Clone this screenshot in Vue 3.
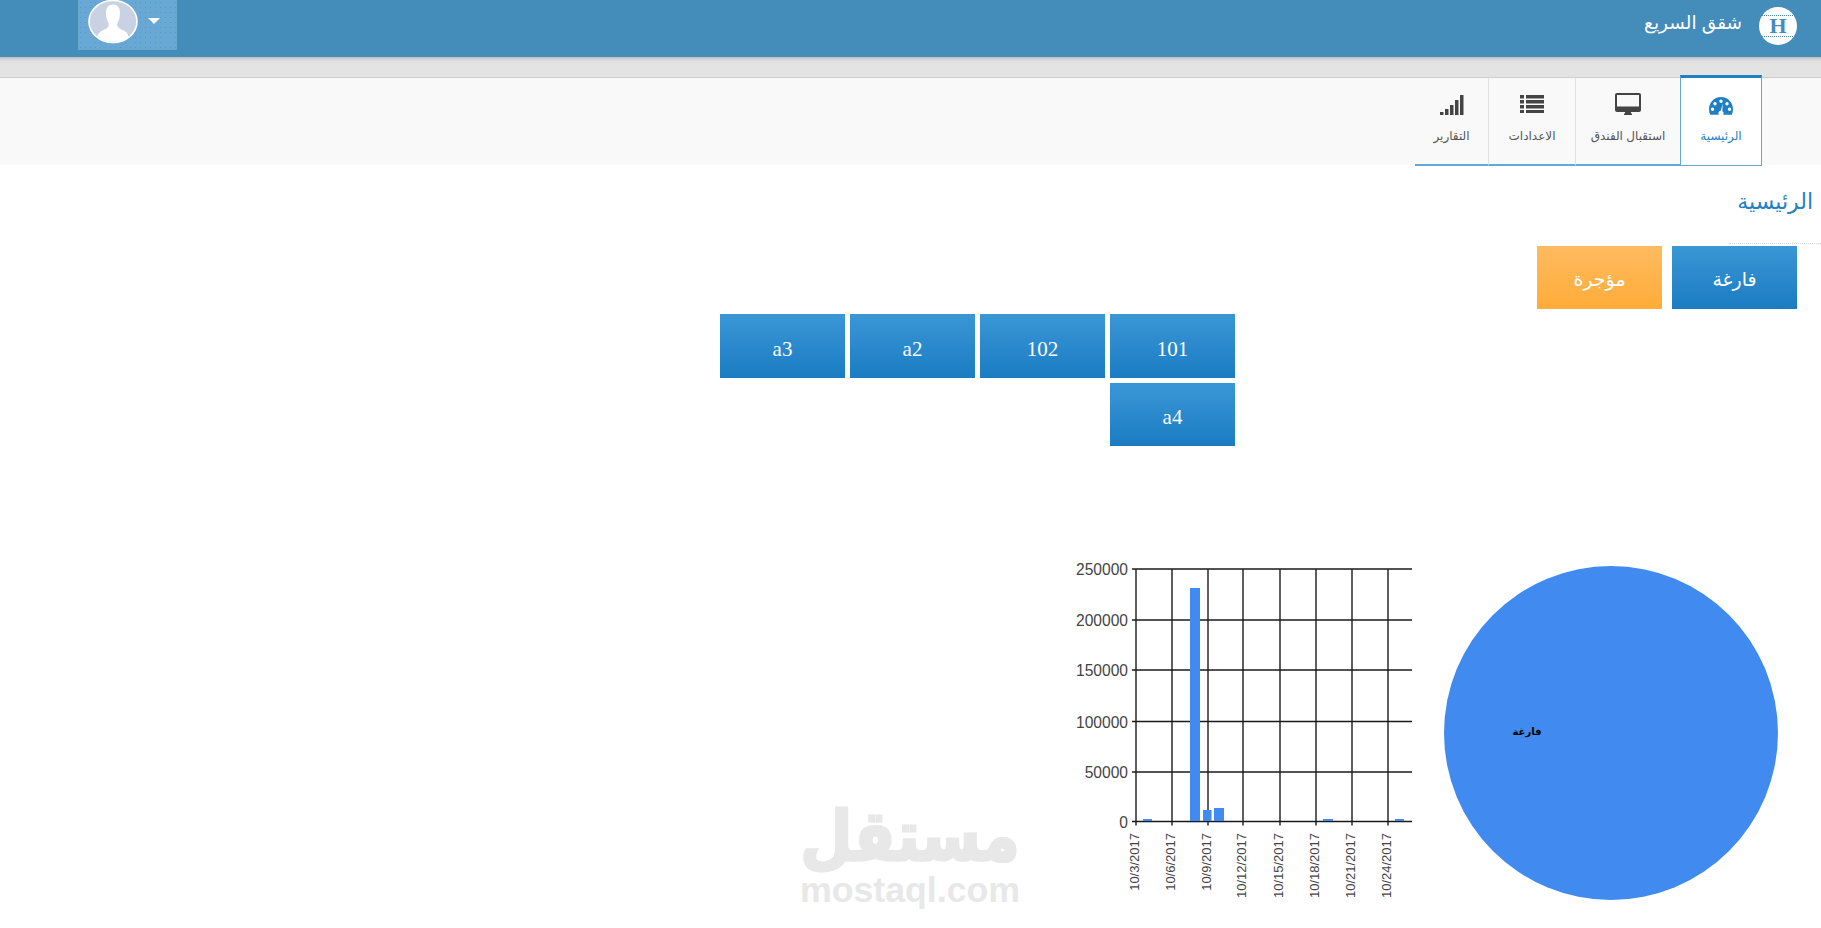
<template>
  <div class="page" dir="rtl">
    <header class="topbar">
      <div class="brand">
        <span class="logo"><span class="logo-h">H</span></span>
        <span class="brand-name">شقق السريع</span>
      </div>
      <div class="user">
        <svg class="avatar" viewBox="0 0 50 44" width="50" height="44">
          <ellipse cx="25" cy="21.5" rx="24" ry="21" fill="#c9d2e2" stroke="#fff" stroke-width="1.600" />
          <path d="M25 4.500c4.500 0 7 3 7 8.500 0 4-1 7-2.500 10-.8 2 0 4 2 5.500l5 2.500c2 1 3.500 3 4.500 6-5 3.500-10 4.500-16 4.500s-11-1-16-4.500c1-3 2.500-5 4.500-6l5-2.500c2-1.500 2.800-3.500 2-5.500-1.500-3-2.500-6-2.500-10 0-5.500 2.500-8.500 7-8.500z" fill="#fff" />
        </svg>
        <span class="caret"></span>
      </div>
    </header>
    <div class="band"></div>
    <nav class="tabs">
      <a v-for="t in tabs" :key="t.label" class="tab" :class="t.cls">
        <svg class="tab-icon" :width="t.w" :height="t.h" :viewBox="`0 0 ${t.w} ${t.h}`" v-html="t.icon"></svg>
        <span class="tab-label">{{ t.label }}</span>
      </a>
    </nav>
    <section class="title-block">
      <h1 class="title">الرئيسية</h1>
    </section>
    <div class="legend">
      <button class="tile blue sans">فارغة</button>
      <button class="tile orange sans">مؤجرة</button>
    </div>
    <div class="rooms">
      <button v-for="r in rooms" :key="r" class="tile blue room">{{ r }}</button>
    </div>
    <div class="charts">
      <svg class="pie" width="340" height="360" viewBox="1440 560 340 360">
        <circle cx="1611" cy="733" r="167" fill="#418bf0" />
        <text x="1527" y="735" text-anchor="middle" class="pie-label">فارغة</text>
      </svg>
      <svg class="bars" width="360" height="360" viewBox="1060 560 360 360">
        <g stroke="#1a1a1a" stroke-width="1.400">
          <line v-for="g in yGrid" :key="g.v" x1="1132" x2="1412" :y1="g.y" :y2="g.y" />
          <line v-for="x in xGrid" :key="x" :x1="x" :x2="x" y1="569" y2="825.500" />
        </g>
        <text v-for="g in yGrid" :key="'l' + g.v" x="1128" :y="g.y + 6" text-anchor="end" class="y-label">{{ g.v }}</text>
        <rect v-for="b in barData" :key="b.x" :x="b.x" :y="b.y" :width="b.w" :height="821 - b.y" fill="#418bf0" />
        <text v-for="l in xLabels" :key="l.t" class="x-label" text-anchor="end" :transform="`translate(${l.x} 833) rotate(-90)`">{{ l.t }}</text>
      </svg>
    </div>
    <div class="watermark">
      <span class="wm-ar">مستقل</span>
      <span class="wm-en">mostaql.com</span>
    </div>
  </div>
</template>

<script setup>
const tabs = [
  {
    label: 'الرئيسية', cls: 'home active', w: 24, h: 18,
    icon: '<path fill="#1f7fc3" fill-rule="evenodd" d="M12 0C5 0 0 5.500 0 12.500c0 2 .4 3.700 1.200 5.300h21.600c.8-1.600 1.200-3.300 1.200-5.300C24 5.500 19 0 12 0zM12 2.500a1.700 1.700 0 1 1 0 3.400 1.700 1.700 0 0 1 0-3.400zM6 5a1.700 1.700 0 1 1 0 3.400A1.700 1.700 0 0 1 6 5zM18 5a1.700 1.700 0 1 1 0 3.400A1.700 1.700 0 0 1 18 5zM3.500 10.500a1.700 1.700 0 1 1 0 3.400 1.700 1.700 0 0 1 0-3.400zM20.500 10.500a1.700 1.700 0 1 1 0 3.400 1.700 1.700 0 0 1 0-3.400zM13.800 6.500l-.5 7.500c.8.500 1.300 1.300 1.300 2.200 0 .6-.2 1.100-.5 1.600H10c-.4-.5-.6-1-.6-1.600 0-1.300 1-2.400 2.300-2.500z"/>'
  },
  {
    label: 'استقبال الفندق', cls: 'desk', w: 26, h: 22,
    icon: '<path fill="#444" fill-rule="evenodd" d="M2 0h22a2 2 0 0 1 2 2v15a2 2 0 0 1-2 2H16v1.500h1V22H9v-1.500h1V19H2a2 2 0 0 1-2-2V2a2 2 0 0 1 2-2zM2 2v11.500h22V2z"/>'
  },
  {
    label: 'الاعدادات', cls: 'settings', w: 24, h: 18,
    icon: '<path fill="#444" d="M0 0h4v3.500H0zM6 0h18v3.500H6zM0 5h4v3.500H0zM6 5h18v3.500H6zM0 10h4v3.500H0zM6 10h18v3.500H6zM0 15h4v3H0zM6 15h18v3H6z"/>'
  },
  {
    label: 'التقارير', cls: 'reports', w: 24, h: 20,
    icon: '<path fill="#444" d="M0 17h3.500v3H0zM5 14h3.500v6H5zM10 10h3.500v10H10zM15 5h3.500v15H15zM20 0h3.500v20H20z"/>'
  }
]
const rooms = ['101', '102', 'a2', 'a3', 'a4']
const yGrid = [
  { v: 250000, y: 569 },
  { v: 200000, y: 620 },
  { v: 150000, y: 670 },
  { v: 100000, y: 721.5 },
  { v: 50000, y: 772 },
  { v: 0, y: 821.5 }
]
const xGrid = [1136, 1172, 1208, 1243, 1280, 1316, 1352, 1388]
const barData = [
  { x: 1143, y: 819, w: 9 },
  { x: 1190, y: 588, w: 10 },
  { x: 1203, y: 810, w: 8.500 },
  { x: 1214, y: 808, w: 10 },
  { x: 1323, y: 819, w: 10 },
  { x: 1395, y: 819, w: 9 }
]
const dates = ['10/3/2017', '10/6/2017', '10/9/2017', '10/12/2017', '10/15/2017', '10/18/2017', '10/21/2017', '10/24/2017']
const xLabels = dates.map((t, i) => ({ t, x: xGrid[i] + 3 }))
</script>

<style>
html, body { margin: 0; background: #fff; }
</style>

<style scoped>
.page {
  position: relative;
  width: 1821px;
  height: 928px;
  overflow: hidden;
  background: #fff;
  font-family: "Liberation Sans", "DejaVu Sans", sans-serif;
}
.topbar {
  height: 57px;
  background: #448cba;
  display: flex;
  justify-content: space-between;
  align-items: flex-start;
  padding: 0 24px 0 78px;
}
.brand {
  display: flex;
  align-items: center;
  gap: 17px;
  height: 50px;
  color: #fff;
}
.logo {
  width: 38px;
  height: 38px;
  border-radius: 50%;
  background: #fff;
  display: flex;
  align-items: center;
  justify-content: center;
  margin-top: 2px;
}
.logo-h {
  width: 100%;
  text-align: center;
  font: bold 22px/20px "Liberation Serif", serif;
  color: #448cba;
  border-top: 1px dotted #448cba;
  border-bottom: 1px dotted #448cba;
}
.brand-name { font-size: 18.500px; margin-bottom: 4px; }
.user {
  width: 99px;
  height: 50px;
  box-sizing: border-box;
  display: flex;
  direction: ltr;
  align-items: flex-start;
  gap: 10px;
  padding-left: 10px;
  background-color: #69a8d3;
  background-image: radial-gradient(#4b9bd8 0.8px, transparent 1px);
  background-size: 5px 5px;
}
.avatar { flex: none; }
.caret {
  margin-top: 18px;
  width: 0;
  height: 0;
  border-left: 6.500px solid transparent;
  border-right: 6.500px solid transparent;
  border-top: 6.500px solid #fff;
}
.band {
  height: 21px;
  box-sizing: border-box;
  background: linear-gradient(#bdbdbd, #dcdcdc 3px, #e3e3e3 6px);
  border-bottom: 1px solid #cfcfcf;
}
.tabs {
  height: 88px;
  box-sizing: border-box;
  background: linear-gradient(#f9f9f9 87px, #fff 87px);
  display: flex;
  padding-right: 59px;
}
.tab {
  position: relative;
  box-sizing: border-box;
  height: 88px;
  display: flex;
  flex-direction: column;
  align-items: center;
  color: #555;
  border-bottom: 2px solid #63a9d5;
  border-left: 1px solid #e2e2e2;
}
.tab-icon { position: absolute; }
.tab-label { position: absolute; top: 49px; font-size: 12px; line-height: 18px; white-space: nowrap; }
.home { width: 82px; }
.desk { width: 105px; }
.settings { width: 87px; }
.reports { width: 73px; border-left: 0; }
.home .tab-icon { top: 19px; }
.desk .tab-icon { top: 15px; }
.settings .tab-icon { top: 17px; }
.reports .tab-icon { top: 17px; }
.active {
  height: 91px;
  margin-top: -3px;
  background: #fff;
  color: #2a7fc0;
  border: 1px solid #63a9d5;
  border-top: 3px solid #1f80c3;
}
.title-block { height: 78px; }
.title {
  margin: 0;
  width: 92px;
  height: 78px;
  box-sizing: border-box;
  padding: 21px 8px 0 0;
  font-size: 22px;
  line-height: 30px;
  font-weight: normal;
  color: #2481c4;
  border-bottom: 1px dotted #d8d8d8;
  white-space: nowrap;
}
.legend {
  display: flex;
  gap: 10px;
  margin: 2px 24px 0 0;
}
.tile {
  width: 125px;
  height: 63px;
  border: 0;
  padding: 3px 0 0;
  color: #fff;
  font-family: "Liberation Serif", serif;
  font-size: 21px;
}
.sans { font-family: "Liberation Sans", "DejaVu Sans", sans-serif; font-size: 19px; }
.blue { background: linear-gradient(#3a97d6, #1b7cc2); }
.orange { background: linear-gradient(#ffbb60, #ffac38); }
.rooms {
  display: grid;
  grid-template-columns: repeat(4, 125px);
  grid-auto-rows: 63.500px;
  column-gap: 5px;
  row-gap: 5px;
  margin: 5px 586px 0 0;
}
.room { height: 100%; padding: 7px 0 0; }
.charts {
  display: flex;
  margin: 114px 41px 0 0;
  gap: 20px;
}
.pie, .bars { flex: none; display: block; direction: ltr; }
.pie-label { font: bold 10px "Liberation Sans", "DejaVu Sans", sans-serif; fill: #000; }
.y-label { font: 15.600px "Liberation Sans", sans-serif; fill: #444; }
.x-label { font: 13px "Liberation Sans", sans-serif; fill: #444; }
.watermark {
  position: absolute;
  left: 800px;
  top: 800px;
  width: 220px;
  display: flex;
  flex-direction: column;
  align-items: center;
  color: #e8e8e8;
  font-weight: bold;
}
.wm-ar {
  font: bold 60px/58px "DejaVu Sans", sans-serif;
  margin: 7px 0;
  white-space: nowrap;
  -webkit-text-stroke: 2.500px #e8e8e8;
  transform: scaleY(1.150);
}
.wm-en { font: bold 35.700px/36px "Liberation Sans", sans-serif; direction: ltr; }
</style>
